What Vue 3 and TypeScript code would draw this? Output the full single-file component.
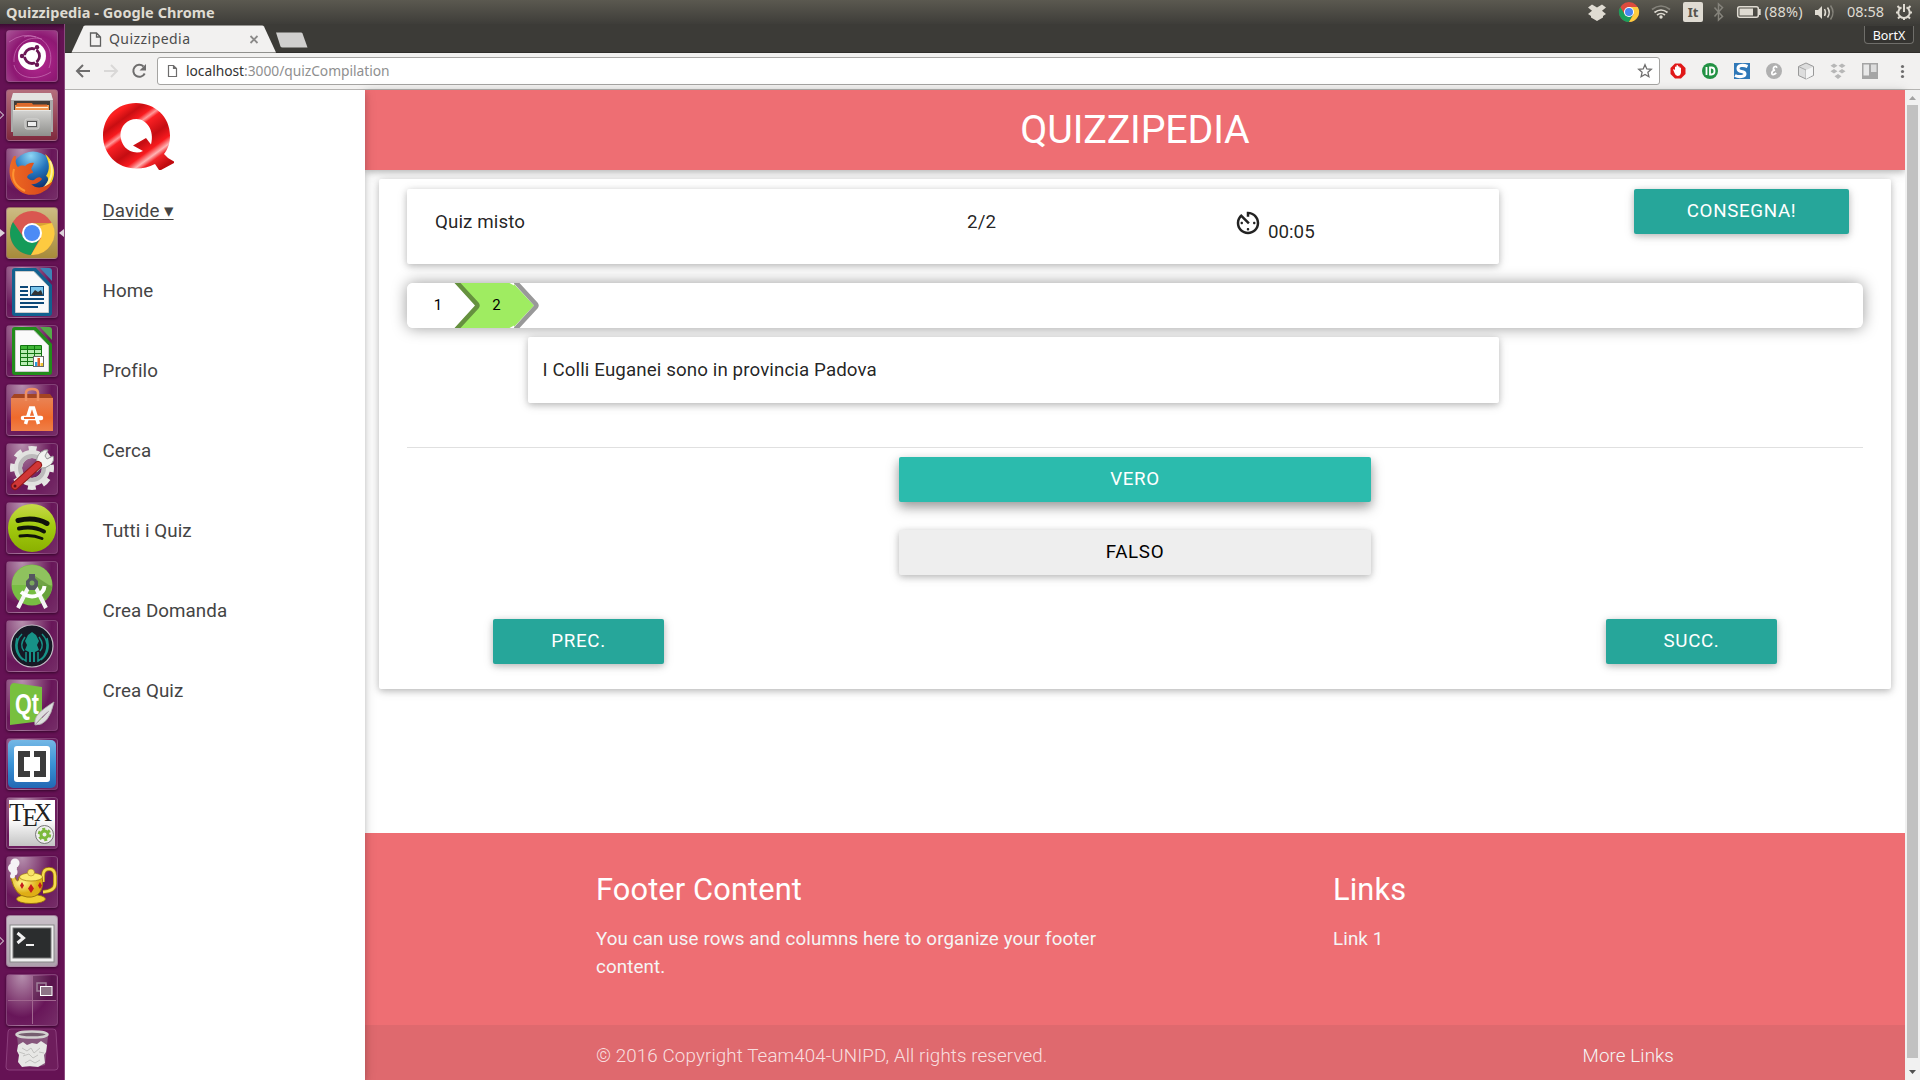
<script setup lang="ts">
import { ref } from 'vue'

const pages = ref<string[]>(['Home', 'Profilo', 'Cerca', 'Tutti i Quiz', 'Crea Domanda', 'Crea Quiz'])
const chosen = ref<'VERO' | 'FALSO'>('VERO')
const answers: Array<'VERO' | 'FALSO'> = ['VERO', 'FALSO']
</script>

<template>
  <div class="desktop">
    <header class="topbar">
      <span class="wintitle">Quizzipedia - Google Chrome</span>
      <svg class="indicators" width="340" height="24" viewBox="1580 0 340 24">
        <g fill="#dfdbd2">
          <path d="M1592 4.500l5 3 5-3 4 3-4 3.300 4 3.200-3 2v1.500l-6 3.500-6-3.500V16l-3-2 4-3.200-4-3.300z" />
        </g>
        <circle cx="1629" cy="12" r="10" fill="#dd4b3e" />
        <path d="M1620.300 7A10 10 0 0 0 1629 22l4.500-8h-9z" fill="#1a9f5c" />
        <path d="M1629 22a10 10 0 0 0 8.700-15H1629l4.500 7.500z" fill="#fecd40" />
        <circle cx="1629" cy="12" r="5" fill="#fff" /><circle cx="1629" cy="12" r="4" fill="#4886f2" />
        <g fill="none" stroke-width="1.700">
          <path d="M1652 9.500q9-7 18 0" stroke="#85837b" />
          <path d="M1654.500 12.500q6.500-5 13 0M1657 15q4-3 8 0" stroke="#dfdbd2" />
        </g>
        <circle cx="1661" cy="17" r="1.700" fill="#dfdbd2" />
        <rect x="1683" y="2" width="20" height="20" rx="2" fill="#dfdbd2" />
        <text x="1693" y="17" text-anchor="middle" class="kbd">It</text>
        <path d="M1714.500 7.500l8 9-4 3.500V4l4 3.500-8 9" fill="none" stroke="#85837b" stroke-width="1.500" />
        <rect x="1737.700" y="6.700" width="20.600" height="10.600" rx="2" fill="none" stroke="#dfdbd2" stroke-width="1.500" />
        <rect x="1739.500" y="8.500" width="13.500" height="7" fill="#dfdbd2" />
        <path d="M1759.700 9v6" stroke="#dfdbd2" stroke-width="2" />
        <text x="1764.500" y="17" class="ind" textLength="38">(88%)</text>
        <path d="M1815 10h3l4-4v13l-4-4h-3z" fill="#dfdbd2" />
        <path d="M1824.500 9q2 3.500 0 7M1827.500 7.500q3.500 5 0 10" fill="none" stroke="#dfdbd2" stroke-width="1.500" />
        <path d="M1830.500 5.500q5 7 0 14" fill="none" stroke="#85837b" stroke-width="1.500" />
        <text x="1847" y="17" class="ind" textLength="37">08:58</text>
        <g stroke="#dfdbd2" stroke-width="2" fill="none">
          <path d="M1901.500 7.300a5.700 5.700 0 1 0 5 0M1904 4v8" />
          <path d="M1904 17.500v2.500M1909 12.500h3M1896 12.500h3M1907.500 16l2.500 2.500M1900.500 16l-2.500 2.500M1908 8.500l2.500-2.500M1900 8.500l-2.500-2.500" />
        </g>
      </svg>
    </header>

    <div class="workspace">
      <nav class="launcher">
        <div class="tile dash">
          <svg viewBox="0 0 52 52">
            <g fill="none" stroke="#d58bc4" stroke-opacity=".55"><path d="M8 32C7 15 22 5 36 9M18 7c18-5 32 12 25 31M8 35c3 13 21 17 37 7" /><path d="M3 12q14-10 27-5" /></g>
            <circle cx="26" cy="26" r="14" fill="#fff" />
            <circle cx="26" cy="26" r="7.500" fill="none" stroke="#6a1654" stroke-width="2.800" />
            <path d="M26 26h-12M26 26l6-10.400M26 26l6 10.400" stroke="#fff" stroke-width="1.500" />
            <circle cx="26" cy="26" r="5.500" fill="#fff" />
            <g fill="#6a1654"><circle cx="16" cy="26" r="2.200" /><circle cx="31" cy="17.300" r="2.200" /><circle cx="31" cy="34.700" r="2.200" /></g>
          </svg>
        </div>
        <div class="tile files">
          <svg viewBox="0 0 52 52">
            <defs><linearGradient id="metal" x2="0" y2="1"><stop stop-color="#d0d0ce" /><stop offset="1" stop-color="#8f8f8c" /></linearGradient></defs>
            <path d="M7 5h38l2 7v31H5V12z" fill="#aaa" /><path d="M7 4h38l2 7H5z" fill="#e3e3e1" />
            <rect x="8" y="12" width="36" height="10" fill="#413c38" />
            <path d="M9 16h34v6H9z" fill="#f0934a" /><path d="M11 14h15l1 1.500h14v2H10z" fill="#dd6a2c" /><path d="M10 18.500h32" stroke="#fff0d8" stroke-width="1.200" />
            <path d="M7 22h38v25H7z" fill="url(#metal)" /><path d="M7 21.500h38" stroke="#e6e6e4" />
            <rect x="19" y="30" width="14" height="10" rx="2" fill="#b4b4b2" stroke="#d6d6d4" /><rect x="21.500" y="32.500" width="9" height="5" fill="#eee" stroke="#555" />
          </svg>
          <i class="run open"></i>
        </div>
        <div class="tile">
          <svg viewBox="0 0 52 52">
            <defs><radialGradient id="globe" cx=".45" cy=".1" r=".8"><stop stop-color="#8ed6f5" /><stop offset=".5" stop-color="#2474bd" /><stop offset="1" stop-color="#0d2d69" /></radialGradient>
            <linearGradient id="fox" x1="0" x2="1"><stop stop-color="#ee6a22" /><stop offset="1" stop-color="#d4421b" /></linearGradient></defs>
            <circle cx="27" cy="25" r="21.500" fill="url(#globe)" />
            <path d="M39 6c5 9 5 16 1 22 4 1 2 9-4 14 9-3 13-12 12-20-1-7-4-12-9-16z" fill="#fbd52c" />
            <path d="M44 13q6 15-7 28" stroke="#fff0a0" stroke-width="2" fill="none" />
            <path d="M8 8C3 16 2 25 6 34c5 10 15 15 26 12 7-2 12-6 15-13-8 7-16 9-22 3 4 1 9-2 11-5-2-3-5-2-8 1-3 1-6-1-7-3 1-3 4-4 6-4 0-2-1-3-2-4l3-6c-3-1-7 1-9 3-3-1-6 0-7 1-2-2-3-6-2-11z" fill="url(#fox)" />
            <path d="M8 21q-4 15 11 22" stroke="#ff9432" stroke-width="2" fill="none" />
          </svg>
        </div>
        <div class="tile chrome">
          <svg viewBox="0 0 52 52">
            <circle cx="26" cy="26" r="22" fill="#d95750" />
            <path d="M7 15A22 22 0 0 0 25 48L34 31 18 31z" fill="#159b59" />
            <path d="M25 48A22 22 0 0 0 46 16H26l9 15z" fill="#fdca40" />
            <path d="M26 16h20l-16 4z" fill="#b57a2b" opacity=".5" />
            <circle cx="26" cy="26" r="10" fill="#fff" /><circle cx="26" cy="26" r="8" fill="#4c8bf5" />
          </svg>
          <i class="run"></i><i class="focus"></i>
        </div>
        <div class="tile">
          <svg viewBox="0 0 52 52">
            <path d="M9 2h21l16 17v28q0 3-3 3H9q-3 0-3-3V5q0-3 3-3z" fill="#12618f" /><path d="M34 2h9q3 0 3 3v10z" fill="#3e84b5" />
            <path d="M9.500 5.500H28l14.500 15V46.500h-33z" fill="#fafafa" stroke="#ccc" />
            <path d="M14 21h8M14 25h8M14 29h8M14 33h24M14 37h24M14 41h18" stroke="#0d4878" stroke-width="2" />
            <rect x="24.500" y="20.500" width="13" height="9" fill="#7cc6ec" stroke="#0d4878" /><path d="M25 29l4-5 3 2 3-2 2 5z" fill="#333" />
          </svg>
        </div>
        <div class="tile">
          <svg viewBox="0 0 52 52">
            <path d="M9 2h21l16 17v28q0 3-3 3H9q-3 0-3-3V5q0-3 3-3z" fill="#228c1b" /><path d="M34 2h9q3 0 3 3v10z" fill="#55a94a" />
            <path d="M9.500 5.500H28l14.500 15V46.500h-33z" fill="#fafafa" stroke="#ccc" />
            <path d="M14 21h22v20H14z" fill="#b9edb2" /><path d="M14 21h22v4H14z" fill="#3fb636" />
            <path d="M14.500 20.500h21v20h-21zM14 24.500h22M14 28.500h22M14 32.500h22M14 36.500h22M21.500 21v20M28.500 21v20" fill="none" stroke="#137512" />
            <rect x="27.500" y="31.500" width="10" height="10" fill="#fff" stroke="#666" /><path d="M29 37h2.500v4H29z" fill="#299bdc" /><path d="M31.500 33H34v8h-2.500z" fill="#dd5d26" /><path d="M34.500 38H37v3h-2.500z" fill="#efc22e" />
          </svg>
        </div>
        <div class="tile">
          <svg viewBox="0 0 52 52">
            <defs><linearGradient id="bag" x2="0" y2="1"><stop stop-color="#e98354" /><stop offset=".6" stop-color="#ef6a2c" /><stop offset="1" stop-color="#ef8048" /></linearGradient></defs>
            <path d="M8 10h36l3 4H5z" fill="#a44422" /><path d="M5 14h42v33H5z" fill="url(#bag)" />
            <path d="M20 17V9q0-4 6-4t6 4v8" fill="none" stroke="#f09062" stroke-width="2.500" />
            <path d="M19.500 40l5-16h3l5 16" stroke="#fff" stroke-width="3.500" fill="none" /><path d="M17 34h18" stroke="#fff" stroke-width="4.500" stroke-linecap="round" /><path d="M18 34h11" stroke="#ed6a2e" stroke-width="2" />
          </svg>
        </div>
        <div class="tile">
          <svg viewBox="0 0 52 52">
            <circle cx="26" cy="25" r="19.500" fill="none" stroke="#e6e6e4" stroke-width="5" stroke-dasharray="8 7.315" stroke-dashoffset="4" />
            <circle cx="26" cy="25" r="14" fill="none" stroke="#e2e2e0" stroke-width="8" />
            <circle cx="26" cy="25" r="12" fill="none" stroke="#bcbabb" stroke-width="4" />
            <path d="M31 23q-2-9 4-14 4-3 7-2l-3 6 2 3 6-3q2 5-3 9t-9 3l-4 4-4-3z" fill="#f3f3f1" stroke="#999" />
            <path d="M32 22L9 43" stroke="#8e1717" stroke-width="8" stroke-linecap="round" /><path d="M32 22L9 43" stroke="#d03636" stroke-width="6" stroke-linecap="round" />
            <circle cx="9" cy="43" r="1.500" fill="#5a1018" />
          </svg>
        </div>
        <div class="tile">
          <svg viewBox="0 0 52 52">
            <defs><linearGradient id="spot" x2="0" y2="1"><stop stop-color="#c8d94a" /><stop offset=".45" stop-color="#a3cb10" /><stop offset="1" stop-color="#8ab000" /></linearGradient></defs>
            <circle cx="26" cy="26" r="24" fill="url(#spot)" />
            <g fill="none" stroke="#10130a" stroke-linecap="round"><path d="M12 18.500q17-4 29 3" stroke-width="5" /><path d="M13 26.500q14-3 25 3" stroke-width="4" /><path d="M14 34q12-2 22 2.500" stroke-width="3" /></g>
          </svg>
        </div>
        <div class="tile">
          <svg viewBox="0 0 52 52">
            <circle cx="26" cy="24" r="20.500" fill="#78bd43" /><path d="M6 24a20 20 0 0 1 40 0z" fill="#8fc25e" />
            <path d="M29 15l17 11q-1 9-6 13L29 25z" fill="#5c8e37" opacity=".6" />
            <path d="M22.500 26L12 47M29.500 26L40 47" stroke="#f4f4f4" stroke-width="4" />
            <path d="M15 31q9 7 17 3 6-3 6.500-9" fill="none" stroke="#fff" stroke-width="4" />
            <path d="M23 13h6v4l3 3v5l-3 4h-6l-3-4v-5l3-3z" fill="#545760" /><circle cx="26" cy="22" r="2.500" fill="#7ca85d" />
          </svg>
        </div>
        <div class="tile">
          <svg viewBox="0 0 52 52">
            <circle cx="26" cy="26" r="21" fill="#161925" stroke="#c3bfc7" stroke-width="1.200" />
            <path d="M26 12l4 3 3 6-2 4 2 5-4 2v10h-2V32h-2v10h-2V32l-4-2 2-5-2-4 3-6z" fill="#179287" />
            <g fill="none" stroke="#179287" stroke-width="1.500"><path d="M16 14C8 22 10 36 20 41v-9M36 14c8 8 6 22-4 27v-9M11 18q-4 14 6 22M41 18q4 14-6 22M19 17q-6 8-1 14M33 17q6 8 1 14" /></g>
          </svg>
        </div>
        <div class="tile">
          <svg viewBox="0 0 52 52">
            <path d="M8 4l28 4v34L4 46V8q1-4 4-4z" fill="#78c03e" />
            <text x="9" y="35" class="qt" textLength="24" lengthAdjust="spacingAndGlyphs">Qt</text>
            <path d="M48 23C32 33 28 38 29 46q14 1 19-23zM29 46q8-10 14-14" fill="#dedede" stroke="#aaa" stroke-width=".8" />
          </svg>
        </div>
        <div class="tile">
          <svg viewBox="0 0 52 52">
            <defs><linearGradient id="brk" x2="0" y2="1"><stop stop-color="#74b7e5" /><stop offset=".5" stop-color="#3a93d6" /><stop offset="1" stop-color="#2268b4" /></linearGradient></defs>
            <rect x="2" y="2" width="48" height="48" rx="5" fill="url(#brk)" /><rect x="8" y="8" width="36" height="36" rx="3" fill="#fff" />
            <path d="M12 13h12v6h-6v14h6v6H12zM40 13H28v6h6v14h-6v6h12z" fill="#3b3b3b" />
          </svg>
        </div>
        <div class="tile">
          <svg viewBox="0 0 52 52">
            <defs><linearGradient id="tex" x2="0" y2="1"><stop offset=".4" stop-color="#fff" /><stop offset="1" stop-color="#c4c4c4" /></linearGradient></defs>
            <rect x="3" y="3" width="46" height="46" fill="url(#tex)" />
            <text x="3" y="24" class="tex">T</text><text x="16.500" y="29" class="tex">E</text><text x="28" y="24" class="tex">X</text>
            <circle cx="38.500" cy="37.500" r="9" fill="#eee" stroke="#777" />
            <circle cx="38.500" cy="37.500" r="3.500" fill="none" stroke="#7db93d" stroke-width="3" /><circle cx="38.500" cy="37.500" r="5.500" fill="none" stroke="#7db93d" stroke-width="2.500" stroke-dasharray="2.900 2.860" />
          </svg>
        </div>
        <div class="tile">
          <svg viewBox="0 0 52 52">
            <defs><radialGradient id="gold" cx=".35" cy=".3"><stop stop-color="#fff891" /><stop offset="1" stop-color="#dfae16" /></radialGradient></defs>
            <ellipse cx="25" cy="43" rx="14.500" ry="4.500" fill="#f1cf34" stroke="#8f6908" stroke-width=".8" />
            <path d="M37 26V20q0-7 6-7t6 7v8q0 7-12 8" fill="none" stroke="#9f780b" stroke-width="4" /><path d="M37 26V20q0-7 6-7t6 7v8q0 7-12 8" fill="none" stroke="#f5db4e" stroke-width="2.500" />
            <path d="M5 22l4-1q3 8 4 0h23q2 9-2 15-4 6-13 5Q9 40 5 22z" fill="url(#gold)" stroke="#9f780b" />
            <ellipse cx="25" cy="21" rx="11.500" ry="4" fill="#fcec70" stroke="#9f780b" stroke-width=".7" /><circle cx="25" cy="16.500" r="3.500" fill="#f8e369" stroke="#9f780b" stroke-width=".5" />
            <path d="M25 28l3 4.500-3 4.500-3-4.500zM16 26l2 3.500-2 3.500-2-3.500zM34 26l2 3.500-2 3.500-2-3.500z" fill="#c51c1d" />
            <g fill="#f5f2f5"><circle cx="9" cy="7" r="4.500" /><circle cx="6.500" cy="12" r="4.500" /><circle cx="8" cy="16" r="3.500" /><circle cx="6.500" cy="20" r="2.500" /></g>
          </svg>
        </div>
        <div class="tile terminal">
          <svg viewBox="0 0 52 52">
            <rect x="4" y="10" width="44" height="37" fill="#efefef" stroke="#888" /><rect x="7" y="13" width="38" height="30" fill="#2b2d2e" stroke="#777" />
            <path d="M11.500 18l6 5-6 5" fill="none" stroke="#f1f1f1" stroke-width="3" /><path d="M20 30h8" stroke="#f1f1f1" stroke-width="2" />
          </svg>
          <i class="run open"></i>
        </div>
        <div class="tile">
          <svg viewBox="0 0 52 52">
            <rect x="27" y="2" width="23" height="24" fill="#431039" opacity=".4" />
            <path d="M26.500 2v48M2 26.500h48" stroke="#a0668f" />
            <rect x="31" y="9" width="9" height="8" fill="none" stroke="#9f8199" stroke-width="1.500" /><rect x="34.500" y="12.500" width="11.500" height="9" fill="#8d7486" stroke="#fff" />
          </svg>
        </div>
        <div class="trash">
          <svg viewBox="0 0 54 44">
            <path d="M6 1h42q3 0 3 3l2 35q0 3-3 3H4q-3 0-3-3L3 4q0-3 3-3z" fill="#6e1d5c" stroke="#8c3f7c" />
            <path d="M12 8h31l-3 29q-12 4-25 0z" fill="#8c6584" opacity=".8" />
            <ellipse cx="27" cy="6.500" rx="15.500" ry="3" fill="#765e70" stroke="#d2d0cf" stroke-width="2.500" />
            <path d="M13 17l5-3 4 3 5-2 5 1 4-3 6 4-1 7-2 3 1 8-7 4-8-1-8 1-4-5 1-7-2-4z" fill="#e7e7e5" />
            <path d="M17 20l5 3 4-3 3 5 6-5M18 28l6-2 4 4 5-3M20 35l5-3 5 3 5-3M14 24l6 2M34 24l5 1" fill="none" stroke="#c2c2c0" />
          </svg>
        </div>
      </nav>

      <div class="browser">
        <div class="tabstrip">
          <svg class="tabshape" width="250" height="28" viewBox="0 0 250 28">
            <path d="M6.500 28L18.500 2q.6-1 2-1H197q1.400 0 2 1l12 26z" fill="#f2f1f0" />
            <g fill="none" stroke="#5f5f5e" stroke-width="1.300"><path d="M25.500 8.500h6l4 4v9h-10zM31.500 8.500v4h4" /></g>
            <path d="M185.500 11.500l7 7M192.500 11.500l-7 7" stroke="#8b8a89" stroke-width="1.800" />
            <path d="M211 8h25q1 0 1.500 1l5 14h-25q-1.500 0-2-1z" fill="#d0cfce" />
            <text x="44" y="19" class="tabtext" textLength="81">Quizzipedia</text>
          </svg>
          <span class="user">BortX</span>
        </div>

        <div class="toolbar">
          <svg class="navicons" width="92" height="36" viewBox="0 0 92 36">
            <path d="M25 18H13M18 12l-6 6 6 6" fill="none" stroke="#6e6d6d" stroke-width="2" />
            <path d="M39 18h12M46 12l6 6-6 6" fill="none" stroke="#d9d8d7" stroke-width="2" />
            <path d="M78.500 13.500a6 6 0 1 0 1.200 7" fill="none" stroke="#6e6d6d" stroke-width="2" /><path d="M81 11v6.500h-6.500z" fill="#6e6d6d" />
          </svg>
          <div class="address">
            <svg width="12" height="14" viewBox="0 0 12 14"><path d="M1.500 1.500h5l3 3v8h-8zM6.500 1.500v3h3" fill="none" stroke="#6e6d6d" stroke-width="1.200" /></svg>
            <span class="url"><b>localhost</b>:3000/quizCompilation</span>
            <svg class="star" width="16" height="16" viewBox="0 0 16 16"><path d="M8 1.700l1.800 4.200 4.500.4-3.400 3 1 4.500L8 11.500l-3.900 2.300 1-4.500-3.400-3 4.500-.4z" fill="none" stroke="#6e6d6d" stroke-width="1.300" /></svg>
          </div>
          <svg class="extensions" width="260" height="36" viewBox="1660 53 260 36">
            <path d="M1675 63.500h6l4.500 4.500v6l-4.500 4.500h-6l-4.500-4.500v-6z" fill="#e01818" />
            <path d="M1674.500 73l-1.500-3.500q1-.8 2 .5V67q.8-1 1.400 0v-1.500q.9-1 1.600 0v1q.9-.8 1.600.2v1q.8-.5 1.400.3v4.500q-.5 3.500-3.500 3.500-2 0-3-3z" fill="#fff" />
            <circle cx="1710" cy="71" r="8" fill="#239244" /><path d="M1706.500 67v8M1710 67.500h1.500q3 0 3 3.500t-3 3.500h-1.500z" fill="none" stroke="#fff" stroke-width="1.800" />
            <rect x="1734" y="63" width="16" height="16" fill="#2f78b8" /><path d="M1747.500 66.500q-3.500-1.500-6.500-1t-3 3 3.500 3 3.500 2.500-3.500 2.500-6.500-1" fill="none" stroke="#fff" stroke-width="3" />
            <circle cx="1774" cy="71" r="8" fill="#b0b0b0" /><path d="M1776.500 68q.5-2-1.500-1.500t-1.500 3.500h1.500q-3.500 1-3.200 3.500t4.500-.5" fill="none" stroke="#fff" stroke-width="1.700" />
            <path d="M1806 63l7.500 3.500v9L1806 79l-7.500-3.500v-9z" fill="#ddd" stroke="#999" /><path d="M1798.500 66.500l7.500 3.500v9" fill="none" stroke="#aaa" /><path d="M1806 70l7-3v8l-7 4z" fill="#f5f5f5" />
            <path d="M1834 63.500l3.500 2.200-3.500 2.300-3.500-2.300zM1842 63.500l3.500 2.200-3.500 2.300-3.500-2.300zM1834 69l3.500 2.300-3.500 2.200-3.500-2.200zM1842 69l3.500 2.300-3.500 2.200-3.500-2.200zM1838 74l3.500 2.200L1838 79l-3.500-2.800z" fill="#b7b7b7" />
            <rect x="1862" y="63" width="16" height="16" fill="#a5a5a5" /><rect x="1863.500" y="64.500" width="5.500" height="11" fill="#e8e8e8" /><rect x="1871" y="64.500" width="5.500" height="7.500" fill="#ddd" />
            <g fill="#6e6d6d"><circle cx="1902.500" cy="66.500" r="1.600" /><circle cx="1902.500" cy="71.500" r="1.600" /><circle cx="1902.500" cy="76.500" r="1.600" /></g>
          </svg>
        </div>

        <div class="viewport">
          <aside class="sidenav">
            <svg class="logo" width="72" height="70" viewBox="0 0 72 70">
              <defs>
                <linearGradient id="gloss" gradientUnits="userSpaceOnUse" x1="0" y1="0" x2="53.300" y2="73.300">
                  <stop offset=".12" stop-color="#e02a2c" /><stop offset=".18" stop-color="#ff2020" /><stop offset=".28" stop-color="#c90e12" /><stop offset=".37" stop-color="#f81a1e" /><stop offset=".42" stop-color="#ff9a9a" /><stop offset=".46" stop-color="#fb2024" /><stop offset=".62" stop-color="#c50d12" /><stop offset=".73" stop-color="#f81a1e" /><stop offset=".8" stop-color="#ffb4b4" /><stop offset=".85" stop-color="#f32428" /><stop offset=".97" stop-color="#c00a0e" />
                </linearGradient>
              </defs>
              <path fill="url(#gloss)" fill-rule="evenodd" d="M33 1C52 1 67 15 67 33.500c0 8-2 13-6 18.500l4 4 6 3.500v1.500l-13 7h-2l-4-6C46 65 40 66.500 33 66.500 14 66.500 0 52 0 33.500S14 1 33 1zM33.500 17C24 17 17.500 24 17.500 33S24 50.500 34 50.500c2 0 4-.5 6-1.500l-10-5.500 13-7.500 5 6.500C52 28 43 17 33.500 17z" />
            </svg>
            <a class="account">Davide <span class="caret">▾</span></a>
            <a v-for="page in pages" :key="page" class="navitem">{{ page }}</a>
          </aside>

          <div class="page">
            <header class="brand">QUIZZIPEDIA</header>
            <main class="main">
              <section class="panel">
                <div class="toprow">
                  <div class="card info">
                    <span class="quizname">Quiz misto</span>
                    <span class="count">2/2</span>
                    <div class="timer">
                      <svg width="30" height="30" viewBox="0 0 24 24"><path fill="#222" d="M11 17c0 .55.45 1 1 1s1-.45 1-1-.45-1-1-1-1 .45-1 1zm0-14v4h2V5.080c3.390.49 6 3.390 6 6.920 0 3.870-3.130 7-7 7s-7-3.130-7-7c0-1.680.59-3.220 1.580-4.420L12 13l1.410-1.410-6.800-6.800v.02C4.420 6.450 3 9.050 3 12c0 4.970 4.020 9 9 9 4.970 0 9-4.030 9-9s-4.030-9-9-9h-1zm7 9c0-.55-.45-1-1-1s-1 .45-1 1 .45 1 1 1 1-.45 1-1zM6 12c0 .55.45 1 1 1s1-.45 1-1-.45-1-1-1-1 .45-1 1z" /></svg>
                      <span>00:05</span>
                    </div>
                  </div>
                  <button class="btn submit">CONSEGNA!</button>
                </div>

                <div class="steps">
                  <svg width="140" height="45" viewBox="0 0 140 45">
                    <path d="M47 0h59l21 22.500L106 45H47z" fill="#9fec61" />
                    <path d="M0 0h48l21 22.500L48 45H0z" fill="#fff" />
                    <path d="M47.500 0h6L71.500 19.500q2.500 3 0 6L53.500 45h-6L68 22.500z" fill="#66913f" />
                    <path d="M106.500 0h6l18 19.500q2.500 3 0 6l-18 19.500h-6L127 22.500z" fill="#999" />
                    <path d="M102.500 0h4.500v2.500zM102.500 45h4.500v-2.500z" fill="#fff" />
                    <text x="31" y="27" text-anchor="middle" class="stepno">1</text>
                    <text x="89.500" y="27" text-anchor="middle" class="stepno">2</text>
                  </svg>
                </div>

                <div class="card question">I Colli Euganei sono in provincia Padova</div>
                <div class="rule"></div>
                <div class="answers">
                  <button v-for="a in answers" :key="a" class="btn answer" :class="{ chosen: a === chosen }" @click="chosen = a">{{ a }}</button>
                </div>
                <div class="pager">
                  <button class="btn step">PREC.</button>
                  <button class="btn step">SUCC.</button>
                </div>
              </section>
            </main>

            <footer class="footer">
              <div class="footcols">
                <div class="about">
                  <h5>Footer Content</h5>
                  <p>You can use rows and columns here to organize your footer content.</p>
                </div>
                <div class="links">
                  <h5>Links</h5>
                  <p>Link 1</p>
                </div>
              </div>
              <div class="copyright">
                <span>© 2016 Copyright Team404-UNIPD, All rights reserved.</span>
                <a>More Links</a>
              </div>
            </footer>
          </div>

          <div class="scrollbar">
            <svg width="15" height="15"><path d="M4 10l3.500-4 3.500 4z" fill="#a3a3a3" /></svg>
            <div class="thumb"></div>
            <svg width="15" height="22"><path d="M4 12h7l-3.500 4z" fill="#505050" /></svg>
          </div>
        </div>
      </div>
    </div>
  </div>
</template>

<style>
html, body { margin: 0; overflow: hidden; background: #fff; }
</style>

<style scoped>
* { box-sizing: border-box; }
.desktop { width: 1920px; height: 1080px; overflow: hidden; display: flex; flex-direction: column; font-family: Roboto, sans-serif; }
.topbar { height: 24px; flex: none; display: flex; align-items: center; justify-content: space-between; padding-left: 6px; background: linear-gradient(#5b5950, #3e3d39); }
.wintitle { font: bold 14.500px/24px "Noto Sans", sans-serif; color: #dfdbd2; letter-spacing: .05px; margin-top: -1px; }
.ind { font: 14.500px "Noto Sans", sans-serif; fill: #dfdbd2; }
.kbd { font: bold 13px "Noto Sans", sans-serif; fill: #55534c; }
.workspace { flex: 1; min-height: 0; display: flex; }

.launcher { width: 65px; flex: none; background: linear-gradient(#3c0a32, #651254 7px); border-right: 1px solid #8b4a7e; padding: 6px 0 0 6px; display: flex; flex-direction: column; gap: 7px; }
.tile { position: relative; width: 52px; height: 52px; flex: none; border-radius: 4px; border: 1px solid #93588788; background: radial-gradient(ellipse at 30% 0, #b690ae 0, #8a4a7c 35%, #681659 60%, #762e68 100%); box-shadow: 0 1px 3px #35072b; }
.tile svg { display: block; width: 52px; height: 52px; margin: -1px; }
.tile.dash { background: radial-gradient(circle at 60% 60%, #b62a92, #8e1873 60%, #a95497); }
.tile.files { background: linear-gradient(#b46f7d, #7f293d); }
.tile.chrome { background: linear-gradient(#cdbb83, #a78b3a); }
.tile.terminal { background: linear-gradient(#c9c0c8, #ada1ac); }
.trash { width: 54px; height: 44px; margin: -5px 0 0 -1px; }
.trash svg { display: block; width: 54px; height: 44px; }
.run { position: absolute; left: -7px; top: 21px; border-left: 5px solid #ddd3da; border-top: 4px solid transparent; border-bottom: 4px solid transparent; }
.run.open { width: 6px; height: 6px; left: -10px; top: 22px; border: 1px solid #c9b5c4; transform: rotate(45deg); }
.focus { position: absolute; right: -7px; top: 21px; border-right: 5px solid #ddd3da; border-top: 4px solid transparent; border-bottom: 4px solid transparent; }

.browser { flex: 1; min-width: 0; display: flex; flex-direction: column; }
.tabstrip { height: 29px; flex: none; background: #3c3b37; display: flex; justify-content: space-between; align-items: flex-start; border-bottom: 1px solid #2f2e2b; }
.tabshape { height: 29px; margin-bottom: -1px; }
.tabtext { font: 14px "Noto Sans", sans-serif; fill: #4c4c4c; }
.user { width: 50px; height: 18px; margin: 2px 6px 0 0; border: 1px solid #6f6e6a; border-top: none; border-radius: 0 0 4px 4px; background: #343330; color: #fff; font: 12.500px/19px "Noto Sans", sans-serif; text-align: center; }
.toolbar { height: 37px; flex: none; background: #f2f1f0; border-bottom: 1px solid #b5b4b2; display: flex; align-items: flex-start; }
.navicons { flex: none; }
.address { flex: 1; height: 28px; margin-top: 4px; background: #fff; border: 1px solid #a5a4a2; border-radius: 3px; display: flex; align-items: center; padding: 0 6px 0 9px; }
.url { flex: 1; margin-left: 7px; font: 13.800px/26px "Noto Sans", sans-serif; letter-spacing: -.03px; color: #8f8f8f; }
.url b { font-weight: 400; color: #333; }
.extensions { flex: none; }

.viewport { flex: 1; min-height: 0; display: flex; }
.sidenav { width: 300px; flex: none; background: #fff; box-shadow: 0 2px 6px rgba(0, 0, 0, .16), 0 2px 12px rgba(0, 0, 0, .14); z-index: 2; padding-left: 38px; display: flex; flex-direction: column; clip-path: inset(0 -20px 0 0); }
.logo { margin-top: 12px; height: 70px; flex: none; }
.account, .navitem { height: 80px; line-height: 80px; font-size: 18.750px; letter-spacing: .06px; color: #444; flex: none; margin-left: -.5px; }
.account { text-decoration: underline; text-underline-offset: 2px; margin-top: -1px; }
.caret { font-family: "DejaVu Sans", sans-serif; font-size: 18.750px; }

.page { flex: 1; min-width: 0; display: flex; flex-direction: column; background: #fff; }
.brand { height: 80px; flex: none; background: #ee6e73; color: #fff; font-size: 39.375px; letter-spacing: -.15px; line-height: 80px; text-align: center; box-shadow: 0 2px 6px rgba(0, 0, 0, .2), 0 2px 12px rgba(0, 0, 0, .14); }
.main { flex: 1; min-height: 0; padding: 9px 14px 0; }
.panel { height: 510px; border-radius: 2px; background: #fff; padding: 10px 28px 0; box-shadow: 0 2px 6px rgba(0, 0, 0, .2), 0 2px 12px rgba(0, 0, 0, .12); display: flex; flex-direction: column; position: relative; }
.card { background: #fff; border-radius: 2px; box-shadow: 0 2px 6px rgba(0, 0, 0, .2), 0 2px 12px rgba(0, 0, 0, .12); font-size: 18.750px; line-height: 28px; letter-spacing: .1px; color: rgba(0, 0, 0, .87); }
.toprow { display: flex; align-items: flex-start; }
.info { width: 1092px; height: 75px; display: flex; padding: 19px 28px 0; }
.quizname { width: 532px; }
.count { width: 266px; }
.timer { display: flex; align-items: flex-start; gap: 5px; letter-spacing: 0; }
.timer span { padding-top: 10px; }
.btn { border: none; border-radius: 2px; height: 45px; background: #26a69a; color: #fff; font: 18.750px/45px Roboto, sans-serif; letter-spacing: .66px; padding: 0; text-align: center; box-shadow: 0 2px 6px rgba(0, 0, 0, .2), 0 2px 12px rgba(0, 0, 0, .12); }
.submit { width: 215px; margin-left: 135px; }
.steps { height: 45px; margin-top: 19px; border-radius: 6px; overflow: hidden; background: #fff; box-shadow: 0 0 15px rgba(0, 0, 0, .4); flex: none; }
.steps svg { display: block; }
.stepno { font: 15px Roboto, sans-serif; fill: #000; }
.question { width: 971px; height: 66px; margin: 9px 0 0 121px; padding: 19px 14.500px; flex: none; }
.rule { height: 1px; background: #e0e0e0; margin-top: 44px; flex: none; }
.answers { margin: 9px auto 0; width: 472px; display: flex; flex-direction: column; gap: 28px; }
.answer { background: #eee; color: #000; }
.answer.chosen { background: #2bbbad; color: #fff; box-shadow: 0 6px 14px rgba(0, 0, 0, .25), 0 4px 10px rgba(0, 0, 0, .2); }
.pager { display: flex; justify-content: space-between; padding: 0 86px; margin-top: 44px; }
.step { width: 171px; }

.footer { flex: none; height: 247px; background: #ee6e73; color: #fff; display: flex; flex-direction: column; }
.footcols { height: 192px; display: flex; padding: 35px 231px 0; }
.about { width: 737px; padding-right: 216px; }
h5 { margin: 0; font-size: 30.750px; line-height: 44px; font-weight: 400; letter-spacing: .13px; }
p { margin: 13px 0 0; font-size: 18.750px; line-height: 28px; letter-spacing: .12px; color: #f5f5f5; }
.copyright { height: 55px; background: rgba(51, 51, 51, .08); padding: 0 231px; display: flex; justify-content: space-between; font-size: 18.750px; font-weight: 300; line-height: 63px; letter-spacing: .12px; color: rgba(255, 255, 255, .8); overflow: hidden; }
.copyright a { color: #f5f5f5; }
.scrollbar { width: 15px; flex: none; background: #f1f1f1; display: flex; flex-direction: column; z-index: 3; }
.thumb { flex: 1; width: 11px; margin-left: 2px; background: #c1c1c1; }

.qt { font: bold 29px "Liberation Sans", sans-serif; fill: #fff; }
.tex { font: 25px "Liberation Serif", serif; fill: #222; }
</style>
